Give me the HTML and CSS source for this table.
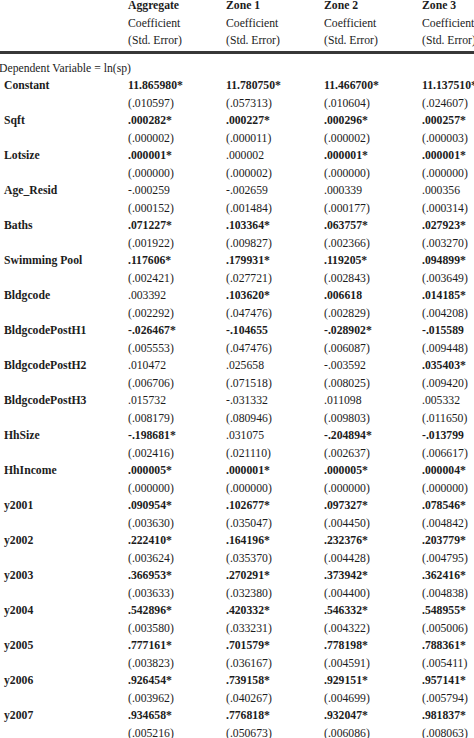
FILE: index.html
```html
<!DOCTYPE html>
<html>
<head>
<meta charset="utf-8">
<link rel="stylesheet" href="styles.css">
</head>
<body>
<div class="page">
  <div class="head">
    <div class="row"><span></span><b>Aggregate</b><b>Zone 1</b><b>Zone 2</b><b>Zone 3</b></div>
    <div class="row"><span></span><span>Coefficient</span><span>Coefficient</span><span>Coefficient</span><span>Coefficient</span></div>
    <div class="row"><span></span><span>(Std. Error)</span><span>(Std. Error)</span><span>(Std. Error)</span><span>(Std. Error)</span></div>
  </div>
  <div class="rule"></div>
  <div class="dep">Dependent Variable = ln(sp)</div>
  <div id="body"></div>
</div>
<script src="app.js"></script>
</body>
</html>
```
FILE: styles.css
```css
html, body {
  margin: 0;
  padding: 0;
  background: #ffffff;
}
body {
  font-family: "Liberation Serif", "Times New Roman", serif;
  font-size: 11.7px;
  line-height: 17.5px;
  color: #1c1c1c;
  width: 474px;
  height: 738px;
  overflow: hidden;
}
.page {
  margin-top: -2.9px;
}
.row {
  display: grid;
  grid-template-columns: 128px 98px 98px 98px 1fr;
  white-space: nowrap;
}
.row b, .row .b {
  font-weight: bold;
}
.lbl {
  padding-left: 4px;
  font-weight: bold;
}
.rule {
  height: 3px;
  background: #383838;
  margin-top: 1.3px;
  margin-bottom: 5.7px;
}
.dep {
  margin-left: -1px;
  white-space: nowrap;
}
```
FILE: app.js
```javascript
const data = [
  ["Constant", ["11.865980*","11.780750*","11.466700*","11.137510*"], "1111", ["(.010597)","(.057313)","(.010604)","(.024607)"]],
  ["Sqft", [".000282*",".000227*",".000296*",".000257*"], "1111", ["(.000002)","(.000011)","(.000002)","(.000003)"]],
  ["Lotsize", [".000001*",".000002",".000001*",".000001*"], "1011", ["(.000000)","(.000002)","(.000000)","(.000000)"]],
  ["Age_Resid", ["-.000259","-.002659",".000339",".000356"], "0000", ["(.000152)","(.001484)","(.000177)","(.000314)"]],
  ["Baths", [".071227*",".103364*",".063757*",".027923*"], "1111", ["(.001922)","(.009827)","(.002366)","(.003270)"]],
  ["Swimming Pool", [".117606*",".179931*",".119205*",".094899*"], "1111", ["(.002421)","(.027721)","(.002843)","(.003649)"]],
  ["Bldgcode", [".003392",".103620*",".006618",".014185*"], "0111", ["(.002292)","(.047476)","(.002829)","(.004208)"]],
  ["BldgcodePostH1", ["-.026467*","-.104655","-.028902*","-.015589"], "1111", ["(.005553)","(.047476)","(.006087)","(.009448)"]],
  ["BldgcodePostH2", [".010472",".025658","-.003592",".035403*"], "0001", ["(.006706)","(.071518)","(.008025)","(.009420)"]],
  ["BldgcodePostH3", [".015732","-.031332",".011098",".005332"], "0000", ["(.008179)","(.080946)","(.009803)","(.011650)"]],
  ["HhSize", ["-.198681*",".031075","-.204894*","-.013799"], "1011", ["(.002416)","(.021110)","(.002637)","(.006617)"]],
  ["HhIncome", [".000005*",".000001*",".000005*",".000004*"], "1111", ["(.000000)","(.000000)","(.000000)","(.000000)"]],
  ["y2001", [".090954*",".102677*",".097327*",".078546*"], "1111", ["(.003630)","(.035047)","(.004450)","(.004842)"]],
  ["y2002", [".222410*",".164196*",".232376*",".203779*"], "1111", ["(.003624)","(.035370)","(.004428)","(.004795)"]],
  ["y2003", [".366953*",".270291*",".373942*",".362416*"], "1111", ["(.003633)","(.032380)","(.004400)","(.004838)"]],
  ["y2004", [".542896*",".420332*",".546332*",".548955*"], "1111", ["(.003580)","(.033231)","(.004322)","(.005006)"]],
  ["y2005", [".777161*",".701579*",".778198*",".788361*"], "1111", ["(.003823)","(.036167)","(.004591)","(.005411)"]],
  ["y2006", [".926454*",".739158*",".929151*",".957141*"], "1111", ["(.003962)","(.040267)","(.004699)","(.005794)"]],
  ["y2007", [".934658*",".776818*",".932047*",".981837*"], "1111", ["(.005216)","(.050673)","(.006086)","(.008063)"]]
];
const body = document.getElementById("body");
for (const [label, vals, bold, errs] of data) {
  const r1 = document.createElement("div");
  r1.className = "row";
  const l = document.createElement("span");
  l.className = "lbl";
  l.textContent = label;
  r1.appendChild(l);
  vals.forEach((v, i) => {
    const s = document.createElement("span");
    if (bold[i] === "1") s.className = "b";
    s.textContent = v;
    r1.appendChild(s);
  });
  body.appendChild(r1);
  const r2 = document.createElement("div");
  r2.className = "row";
  r2.appendChild(document.createElement("span"));
  errs.forEach(e => {
    const s = document.createElement("span");
    s.textContent = e;
    r2.appendChild(s);
  });
  body.appendChild(r2);
}
```
